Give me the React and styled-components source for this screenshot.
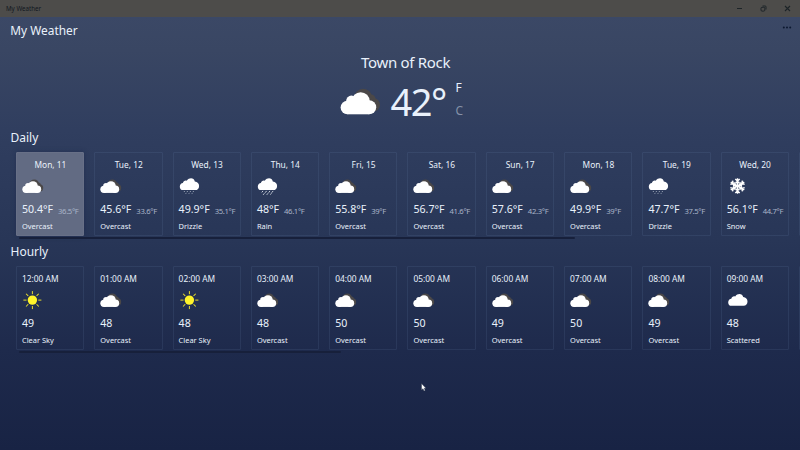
import React from "react";
import styled, { createGlobalStyle } from "styled-components";

const Global = createGlobalStyle`
  * { box-sizing: border-box; }
  html, body { margin: 0; padding: 0; overflow: hidden; }
  body { font-family: "Noto Sans", sans-serif; color: #e9f1fb; }
`;

const Window = styled.main`
  position: relative;
  display: flex;
  flex-direction: column;
  width: 800px;
  height: 450px;
  overflow: hidden;
  background: linear-gradient(#3c4967 0, #394663 50px, #303e5f 130px, #283657 240px, #1e2a4c 350px, #182344 450px);
`;

const TitleBar = styled.div`
  display: flex;
  flex: none;
  align-items: center;
  justify-content: space-between;
  height: 17px;
  padding: 0 9px 0 6px;
  background: #4d4c4a;
  color: #111821;
  font-size: 6.2px;
  line-height: 17px;
`;

const WindowControls = styled.div`
  display: flex;
  gap: 17px;
  height: 8px;
  svg { display: block; }
`;

const Header = styled.header`
  display: flex;
  flex: none;
  justify-content: space-between;
  height: 36px;
  padding: 4px 8px 0 10.3px;
  line-height: 19px;
`;

const Heading = styled.h1`
  margin: 0;
  font-size: 11.9px;
  font-weight: 400;
`;

const MoreButton = styled.button`
  width: 10px;
  height: 13px;
  padding: 0;
  border: 0;
  background: none;
  svg { display: block; }
`;

const Current = styled.section`
  display: flex;
  flex: none;
  flex-direction: column;
  height: 75px;
`;

const Place = styled.h2`
  margin: 0 0 0 361px;
  font-size: 15px;
  font-weight: 400;
  line-height: 19px;
  letter-spacing: -0.3px;
`;

const Reading = styled.div`
  display: flex;
  padding: 0 0 0 340px;
`;

const ReadingIcon = styled.div`
  padding-top: 15.5px;
  width: 50.5px;
  svg { display: block; }
`;

const BigTemperature = styled.div`
  width: 65px;
  font-size: 38px;
  line-height: 58px;
  letter-spacing: -1.5px;
`;

const Units = styled.div`
  display: flex;
  flex-direction: column;
  padding-top: 3.5px;
`;

const Unit = styled.span`
  font-size: 12px;
  line-height: 23px;
  color: ${(p) => (p.$active ? "#e9f1fb" : "#8591a8")};
`;

const Forecast = styled.section`
  display: flex;
  flex: none;
  flex-direction: column;
  height: 114.2px;
`;

const SectionTitle = styled.h2`
  height: 24.3px;
  margin: 0 0 0 10.5px;
  font-size: 12px;
  font-weight: 400;
  line-height: 19px;
`;

const Strip = styled.div`
  display: flex;
  gap: 10px;
  padding-left: 16px;
`;

const Card = styled.article`
  flex: none;
  width: 68.3px;
  height: 84px;
  padding: 4px 4.5px 0 5px;
  border: 1px solid ${(p) => (p.$selected ? "#687087" : "#7f9cc81f")};
  border-radius: 1px;
  background: ${(p) => (p.$selected ? "#626b83" : "transparent")};
  box-shadow: ${(p) => (p.$selected ? "0 0 5px #14204366" : "none")};
`;

const When = styled.div`
  height: 15px;
  font-size: 8.4px;
  line-height: 15px;
  text-align: ${(p) => (p.$centered ? "center" : "left")};
`;

const IconSlot = styled.div`
  height: 28px;
  padding-top: 6.6px;
  svg { display: block; overflow: visible; }
`;

const Temperatures = styled.div`
  display: flex;
  gap: 5px;
  height: 19px;
  line-height: 19px;
  font-size: 10.6px;
  white-space: nowrap;
`;

const Low = styled.span`
  padding-top: 1.5px;
  color: #a9b4c8;
  font-size: 7.7px;
  letter-spacing: -0.35px;
`;

const Condition = styled.div`
  font-size: 7.45px;
  line-height: 15px;
`;

const ScrollThumb = styled.div`
  width: ${(p) => p.$length};
  height: 2px;
  margin: 1px 0 0 19px;
  border-radius: 1px;
  background: #17203b;
`;

const Pointer = styled.svg`
  position: absolute;
  left: 421px;
  top: 383px;
`;

function Overcast({ width = 21.2, height = 14.3 }) {
  return (
    <svg width={width} height={height} viewBox="0 0 40 27">
      <g fill="#4b4848">
        <circle cx="23.2" cy="9.8" r="9" />
        <circle cx="33.3" cy="16.8" r="6.7" />
        <circle cx="31" cy="11" r="4.5" />
      </g>
      <g fill="#fff">
        <circle cx="7.4" cy="19.5" r="6.8" />
        <circle cx="11.4" cy="12.9" r="5.3" />
        <circle cx="20.7" cy="13.2" r="9" />
        <circle cx="29.2" cy="19.3" r="7" />
        <path d="M7.4 13H29.2V26.3H7.4Z" />
      </g>
    </svg>
  );
}

const puffPath = "M4 12 C1.8 12 .7 10.5 .7 8.6 C.7 6.5 2.2 5.1 3.8 5 C4.2 2.8 6 2 7.7 2.6 C10.2-.9 15-.3 15.7 3.3 C18.4 3.4 20 5.4 20 7.8 C20 10.3 18.5 12 16.1 12Z";

function Scattered() {
  return (
    <svg width="22" height="16" viewBox="0 0 22 16">
      <path d={puffPath} transform="translate(.5 .8)" fill="#fff" />
    </svg>
  );
}

function WetCloud({ rain }) {
  return (
    <svg width="22" height="20" viewBox="0 0 22 20">
      <path d={puffPath} transform="translate(.1 -.9)" fill="#fff" />
      <path
        transform="translate(0 -.3)"
        d={rain
          ? "M6 12.2l-1.2 1.5M9.6 12.2l-1.4 1.8M13 12.2l-1.3 1.7M16.2 12.2l-1.5 1.8M7.4 14.6l-1.2 1.5M11 14.6l-1.2 1.5M14.4 14.6l-1 1.3"
          : "M5.7 12.3l-.7 1M8.7 12.3l-.7 1M11.7 12.3l-.7 1M14.7 12.3l-.7 1M7.3 14.2l-.6.9M10.4 14.2l-.6.9M13.5 14.2l-.6.9"}
        stroke={rain ? "#d4dbe5" : "#a3adbd"}
        strokeWidth={rain ? 0.95 : 0.9}
      />
    </svg>
  );
}

function Sun() {
  const rays = [0, 45, 90, 135, 180, 225, 270, 315];
  return (
    <svg width="22" height="18" viewBox="0 0 22 18">
      <g transform="translate(10.4 7.1)">
        <circle r="4.7" fill="#fff42b" />
        {rays.map((a) => (
          <path key={a} d="M0-5.9V-9" transform={`rotate(${a})`} stroke="#eee22d" strokeWidth=".95" />
        ))}
      </g>
    </svg>
  );
}

function Snow() {
  return (
    <svg width="22" height="18" viewBox="0 0 22 18">
      <g transform="translate(10.5 7)" stroke="#fff" strokeWidth="1.45" fill="none">
        {[0, 60, 120, 180, 240, 300].map((a) => (
          <path key={a} d="M0 0V-7.8M-2.2-7L0-4.9L2.2-7M-1.8-4.3L0-2.5L1.8-4.3" transform={`rotate(${a})`} />
        ))}
      </g>
    </svg>
  );
}

function WeatherIcon({ condition }) {
  if (condition === "Clear Sky") return <Sun />;
  if (condition === "Snow") return <Snow />;
  if (condition === "Scattered") return <Scattered />;
  if (condition === "Rain" || condition === "Drizzle") return <WetCloud rain={condition === "Rain"} />;
  return <Overcast />;
}

const days = [
  ["Mon, 11", "50.4°F", "36.5°F", "Overcast"],
  ["Tue, 12", "45.6°F", "33.6°F", "Overcast"],
  ["Wed, 13", "49.9°F", "35.1°F", "Drizzle"],
  ["Thu, 14", "48°F", "46.1°F", "Rain"],
  ["Fri, 15", "55.8°F", "39°F", "Overcast"],
  ["Sat, 16", "56.7°F", "41.6°F", "Overcast"],
  ["Sun, 17", "57.6°F", "42.3°F", "Overcast"],
  ["Mon, 18", "49.9°F", "39°F", "Overcast"],
  ["Tue, 19", "47.7°F", "37.5°F", "Drizzle"],
  ["Wed, 20", "56.1°F", "44.7°F", "Snow"],
];

const hours = [
  ["12:00 AM", "49", "Clear Sky"],
  ["01:00 AM", "48", "Overcast"],
  ["02:00 AM", "48", "Clear Sky"],
  ["03:00 AM", "48", "Overcast"],
  ["04:00 AM", "50", "Overcast"],
  ["05:00 AM", "50", "Overcast"],
  ["06:00 AM", "49", "Overcast"],
  ["07:00 AM", "50", "Overcast"],
  ["08:00 AM", "49", "Overcast"],
  ["09:00 AM", "48", "Scattered"],
];

function ForecastCard({ when, high, low, condition, selected }) {
  return (
    <Card $selected={selected}>
      <When $centered={Boolean(low)}>{when}</When>
      <IconSlot><WeatherIcon condition={condition} /></IconSlot>
      <Temperatures>
        <span>{high}</span>
        {low && <Low>{low}</Low>}
      </Temperatures>
      <Condition>{condition}</Condition>
    </Card>
  );
}

export default function App() {
  return (
    <>
      <Global />
      <Window>
        <TitleBar>
          <span>My Weather</span>
          <WindowControls>
            <svg width="7" height="8"><path d="M1 3.5H6" stroke="#1d2428" /></svg>
            <svg width="7" height="8" fill="none" stroke="#1d2428">
              <rect x="1" y="2.3" width="3.8" height="3.8" rx="1" />
              <path d="M2.5 1H5.2Q6 1 6 1.8V4.5" />
            </svg>
            <svg width="7" height="8"><path d="M1 1L6 6M6 1L1 6" stroke="#1d2428" strokeWidth="1.1" /></svg>
          </WindowControls>
        </TitleBar>
        <Header>
          <Heading>My Weather</Heading>
          <MoreButton aria-label="More">
            <svg width="10" height="13" fill="#0c1830">
              <circle cx="1.8" cy="6.5" r="1" />
              <circle cx="5" cy="6.5" r="1" />
              <circle cx="8.2" cy="6.5" r="1" />
            </svg>
          </MoreButton>
        </Header>
        <Current>
          <Place>Town of Rock</Place>
          <Reading>
            <ReadingIcon><Overcast width={40} height={27} /></ReadingIcon>
            <BigTemperature>42°</BigTemperature>
            <Units>
              <Unit $active>F</Unit>
              <Unit>C</Unit>
            </Units>
          </Reading>
        </Current>
        <Forecast>
          <SectionTitle>Daily</SectionTitle>
          <Strip>
            {days.map(([when, high, low, condition], i) => (
              <ForecastCard key={when} when={when} high={high} low={low} condition={condition} selected={i === 0} />
            ))}
            <Card />
          </Strip>
          <ScrollThumb $length="556px" />
        </Forecast>
        <Forecast>
          <SectionTitle>Hourly</SectionTitle>
          <Strip>
            {hours.map(([when, high, condition]) => (
              <ForecastCard key={when} when={when} high={high} condition={condition} />
            ))}
            <Card />
          </Strip>
          <ScrollThumb $length="322px" />
        </Forecast>
        <Pointer width="6" height="9" viewBox="0 0 6 9">
          <path d="M.5.5V7L2 5.7L3 8L4.2 7.4L3.2 5.3H5Z" fill="#fff" stroke="#222c42" strokeWidth=".4" />
        </Pointer>
      </Window>
    </>
  );
}
